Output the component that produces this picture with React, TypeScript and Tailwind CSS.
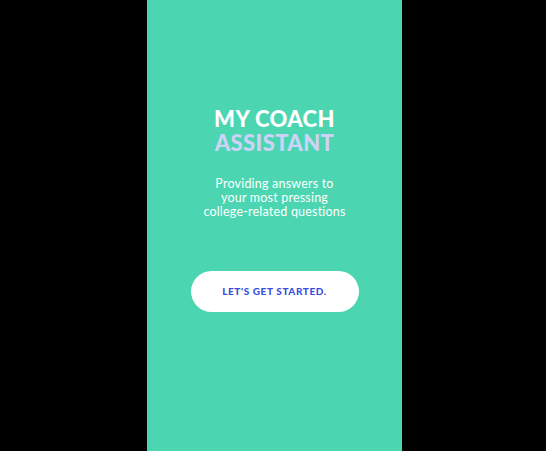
export default function App() {
  return (
    <div className="flex h-[451px] w-full bg-black pl-[147px]">
      <div
        className="flex w-[255px] flex-col items-center bg-[#4bd6b1] pt-[107px]"
        style={{ fontFamily: "Lato, 'Open Sans', sans-serif" }}
      >
        <h1 className="text-center text-[22px] font-black uppercase leading-[24px] tracking-[0.4px]">
          <span className="block text-white">My Coach</span>
          <span className="block text-[#cfd2f7]">Assistant</span>
        </h1>
        <p className="mt-[22px] text-center text-[12.5px] leading-[14px] tracking-[0.2px] text-white">
          Providing answers to
          <br />
          your most pressing
          <br />
          college-related questions
        </p>
        <button className="mt-[52px] flex h-[41px] w-[168px] items-center justify-center rounded-full bg-white text-[10px] font-black uppercase tracking-[0.6px] text-[#3a50dc]">
          Let's get started.
        </button>
      </div>
    </div>
  );
}
